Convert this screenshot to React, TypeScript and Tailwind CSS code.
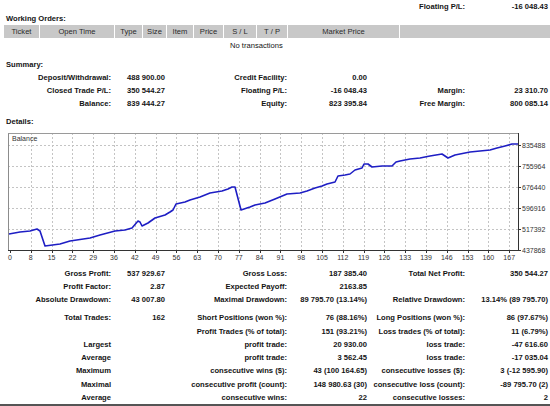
import React from 'react';

const Row = ({ cells, h = 'h-[13px]' }: { cells: string[]; h?: string }) => (
  <div className={`grid grid-cols-[111px_54px_122px_80px_98px_83px] ${h} items-center font-bold text-[#141414]`}>
    {cells.map((c, i) => (
      <div key={i} className="text-right whitespace-nowrap leading-none">
        {c}
      </div>
    ))}
  </div>
);

const headerCols = [
  { label: 'Ticket', w: 'w-[36px]' },
  { label: 'Open Time', w: 'w-[75px]' },
  { label: 'Type', w: 'w-[28px]' },
  { label: 'Size', w: 'w-[24px]' },
  { label: 'Item', w: 'w-[27px]' },
  { label: 'Price', w: 'w-[30px]' },
  { label: 'S / L', w: 'w-[33px]' },
  { label: 'T / P', w: 'w-[31px]' },
  { label: 'Market Price', w: 'w-[112px]' },
];

const xLabels = [0, 8, 15, 22, 29, 36, 42, 49, 56, 63, 70, 77, 84, 91, 98, 105, 112, 119, 126, 133, 139, 146, 153, 160, 167];
const yLabels = ['835488', '755964', '676440', '596916', '517392'];

// balance curve, page coordinates
const curve: [number, number][] = [
  [9, 234], [20, 232], [30, 231], [37, 229], [40, 231], [45, 246], [60, 244], [70, 241], [90, 238],
  [100, 235], [115, 231], [125, 230], [132, 228], [138, 221], [140, 222], [142, 226], [148, 223],
  [155, 218], [165, 215], [170, 212], [173, 210], [176, 204], [185, 202], [190, 200], [200, 197],
  [210, 193], [222, 191], [228, 189], [232, 187], [235, 187], [241, 210], [250, 207], [255, 205],
  [265, 203], [270, 201], [275, 199], [287, 194], [300, 193], [307, 191], [315, 188], [322, 186],
  [327, 184], [335, 182], [338, 176], [345, 175], [350, 174], [355, 170], [362, 168], [364, 164],
  [368, 164], [372, 167], [382, 166], [392, 166], [396, 162], [400, 161], [410, 159], [420, 158],
  [430, 156], [442, 154], [448, 158], [455, 155], [470, 152], [490, 150], [497, 148], [505, 146],
  [512, 144], [518, 144],
];

const BalanceChart = () => {
  const top = 132;
  const gridY = [145, 166, 187, 208, 229].map((y) => y - top);
  const axisY = 250 - top;
  const xs = xLabels.map((_, k) => 10 + 20.8 * k);
  return (
    <svg width="550" height="135" className="block">
      {gridY.map((y) => (
        <line key={y} x1="8" x2="518" y1={y + 0.5} y2={y + 0.5} stroke="#c4c4c4" strokeDasharray="2 2" />
      ))}
      {xs.slice(1).map((x) => (
        <line key={x} x1={Math.round(x) + 0.5} x2={Math.round(x) + 0.5} y1="1" y2={axisY} stroke="#c4c4c4" strokeDasharray="2 2" />
      ))}
      <line x1="8.5" x2="8.5" y1="1" y2={axisY + 0.5} stroke="#8c8c8c" />
      <line x1="8.5" x2="518.5" y1="1.5" y2="1.5" stroke="#9a9a9a" />
      <line x1="518.5" x2="518.5" y1="1" y2={axisY + 1} stroke="#333" />
      <line x1="8" x2="519" y1={axisY + 0.5} y2={axisY + 0.5} stroke="#333" />
      <text x="12" y="9" fontSize="7" fill="#333">Balance</text>
      <polyline
        points={curve.map(([x, y]) => `${x},${y - top}`).join(' ')}
        fill="none"
        stroke="#1e1ec4"
        strokeWidth="1.6"
        strokeLinejoin="round"
      />
      {yLabels.map((l, i) => (
        <g key={l}>
          <line x1="518" x2="521" y1={gridY[i] + 0.5} y2={gridY[i] + 0.5} stroke="#333" />
          <text x="522" y={gridY[i] + 2.5} fontSize="7" fill="#333">{l}</text>
        </g>
      ))}
      <line x1="518" x2="521" y1={axisY + 0.5} y2={axisY + 0.5} stroke="#333" />
      <text x="522" y={axisY + 2.5} fontSize="7" fill="#333">437868</text>
      {xLabels.map((l, k) => (
        <g key={l}>
          <line x1={Math.round(xs[k]) + 0.5} x2={Math.round(xs[k]) + 0.5} y1={axisY} y2={axisY + 3} stroke="#333" />
          <text x={xs[k]} y={axisY + 10} fontSize="7" fill="#333" textAnchor="middle">{l}</text>
        </g>
      ))}
    </svg>
  );
};

export default function App() {
  return (
    <div className="w-[550px] h-[406px] overflow-hidden bg-white text-[7.6px] font-['Liberation_Sans',Arial,sans-serif] text-[#141414]">
      <Row cells={['', '', '', '', 'Floating P/L:', '-16 048.43']} />

      <div className="h-[12px] flex items-center pl-[6px] font-bold leading-none">Working Orders:</div>
      <div className="ml-[4px] h-[13px] flex bg-[#c8c8c8] text-[#2a2a2a]">
        {headerCols.map((c) => (
          <div key={c.label} className={`${c.w} border-r border-white flex items-center justify-center leading-none`}>
            {c.label}
          </div>
        ))}
        <div className="flex-1" />
      </div>
      <div className="h-[16px] flex items-center pl-[230px] leading-none">No transactions</div>

      <div className="mt-[4px] h-[13px] flex items-center pl-[6px] font-bold leading-none">Summary:</div>
      <Row cells={['Deposit/Withdrawal:', '488 900.00', 'Credit Facility:', '0.00', '', '']} />
      <Row cells={['Closed Trade P/L:', '350 544.27', 'Floating P/L:', '-16 048.43', 'Margin:', '23 310.70']} />
      <Row cells={['Balance:', '839 444.27', 'Equity:', '823 395.84', 'Free Margin:', '800 085.14']} />

      <div className="mt-[5px] h-[13px] flex items-center pl-[6px] font-bold leading-none">Details:</div>
      <div className="mt-[4px]">
        <BalanceChart />
      </div>

      <Row h="h-[13.3px]" cells={['Gross Profit:', '537 929.67', 'Gross Loss:', '187 385.40', 'Total Net Profit:', '350 544.27']} />
      <Row h="h-[13.3px]" cells={['Profit Factor:', '2.87', 'Expected Payoff:', '2163.85', '', '']} />
      <Row h="h-[13.3px]" cells={['Absolute Drawdown:', '43 007.80', 'Maximal Drawdown:', '89 795.70 (13.14%)', 'Relative Drawdown:', '13.14% (89 795.70)']} />

      <div className="mt-[4.5px]">
        <Row h="h-[13.3px]" cells={['Total Trades:', '162', 'Short Positions (won %):', '76 (88.16%)', 'Long Positions (won %):', '86 (97.67%)']} />
        <Row h="h-[13.3px]" cells={['', '', 'Profit Trades (% of total):', '151 (93.21%)', 'Loss trades (% of total):', '11 (6.79%)']} />
        <Row h="h-[13.3px]" cells={['Largest', '', 'profit trade:', '20 930.00', 'loss trade:', '-47 616.60']} />
        <Row h="h-[13.3px]" cells={['Average', '', 'profit trade:', '3 562.45', 'loss trade:', '-17 035.04']} />
        <Row h="h-[13.3px]" cells={['Maximum', '', 'consecutive wins ($):', '43 (100 164.65)', 'consecutive losses ($):', '3 (-12 595.90)']} />
        <Row h="h-[13.3px]" cells={['Maximal', '', 'consecutive profit (count):', '148 980.63 (30)', 'consecutive loss (count):', '-89 795.70 (2)']} />
        <Row h="h-[13.3px]" cells={['Average', '', 'consecutive wins:', '22', 'consecutive losses:', '2']} />
      </div>
      <div className="h-[2px] bg-[#555]" />
    </div>
  );
}
